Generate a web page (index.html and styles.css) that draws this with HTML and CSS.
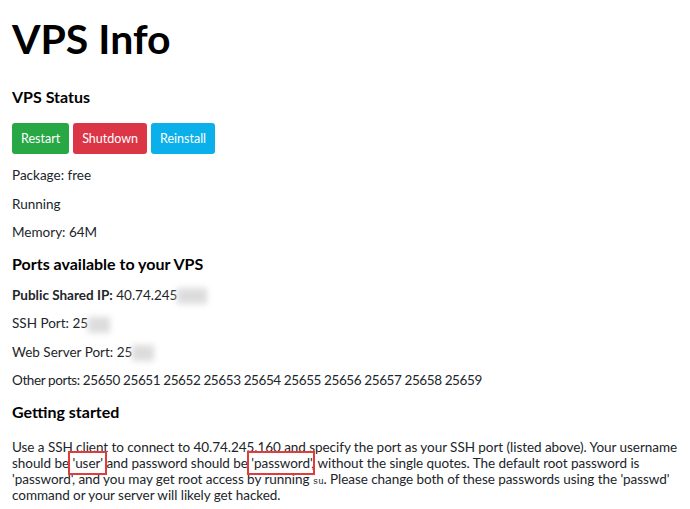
FILE: index.html
```html
<!DOCTYPE html>
<html lang="en">
<head>
    <meta charset="UTF-8">
    <title>VPS Info</title>
    <link rel="stylesheet" href="styles.css">
</head>
<body>
    <h1>VPS Info</h1>

    <h4>VPS Status</h4>
    <div class="buttons">
        <button class="btn btn-success">Restart</button>
        <button class="btn btn-danger">Shutdown</button>
        <button class="btn btn-info">Reinstall</button>
    </div>
    <p>Package: free</p>
    <p>Running</p>
    <p>Memory: 64M</p>

    <h4>Ports available to your VPS</h4>
    <p><b>Public Shared IP:</b> 40.74.245<span class="blur blur-wide"></span></p>
    <p>SSH Port: 25<span class="blur"></span></p>
    <p>Web Server Port: 25<span class="blur"></span></p>
    <p class="ports">Other ports: 25650 25651 25652 25653 25654 25655 25656 25657 25658 25659</p>

    <h4>Getting started</h4>
    <p class="intro">Use a SSH client to connect to 40.74.245.160 and specify the port as your SSH port (listed above). Your username should be <span class="mark">'user'</span> and password should be <span class="mark">'password'</span>, without the single quotes. The default root password is 'password', and you may get root access by running <code>su</code>. Please change both of these passwords using the 'passwd' command or your server will likely get hacked.</p>
</body>
</html>
```

FILE: styles.css
```css
body {
    font-family: 'Lato', 'Open Sans', sans-serif;
    font-size: 13.5px;
    color: #212529;
    margin: 0;
    padding: 14px 12px;
}
h1 {
    font-size: 41px;
    font-weight: 700;
    line-height: 50px;
    margin: 0 0 23px;
    color: #000;
}
h4 {
    font-size: 16px;
    font-weight: 700;
    line-height: 20px;
    margin: 0 0 12px;
    color: #000;
}
p {
    margin: 0 0 10px;
    line-height: 18.5px;
}
p + h4 {
    margin-top: 12px;
}
.buttons {
    display: flex;
    gap: 4px;
    margin: 16px 0 12px;
}
.btn {
    font-family: inherit;
    font-size: 12.5px;
    color: #fff;
    border: none;
    border-radius: 3px;
    height: 31px;
    padding: 0 9px;
}
.btn-success { background: #28a745; }
.btn-danger { background: #dc3545; }
.btn-info { background: #0bb0ea; }
.blur {
    display: inline-block;
    width: 22px;
    height: 16px;
    vertical-align: middle;
    background: #dcdcdc;
    filter: blur(3px);
}
.blur-wide { width: 30px; }
.ports {
    letter-spacing: -0.4px;
}
h4 + .intro {
    margin-top: 17px;
}
.intro {
    line-height: 16px;
    letter-spacing: -0.05px;
}
.mark {
    outline: 2px solid #e03c3c;
    outline-offset: 2px;
}
code {
    font-family: 'Liberation Mono', monospace;
    font-size: 9px;
    line-height: 1;
}
```
